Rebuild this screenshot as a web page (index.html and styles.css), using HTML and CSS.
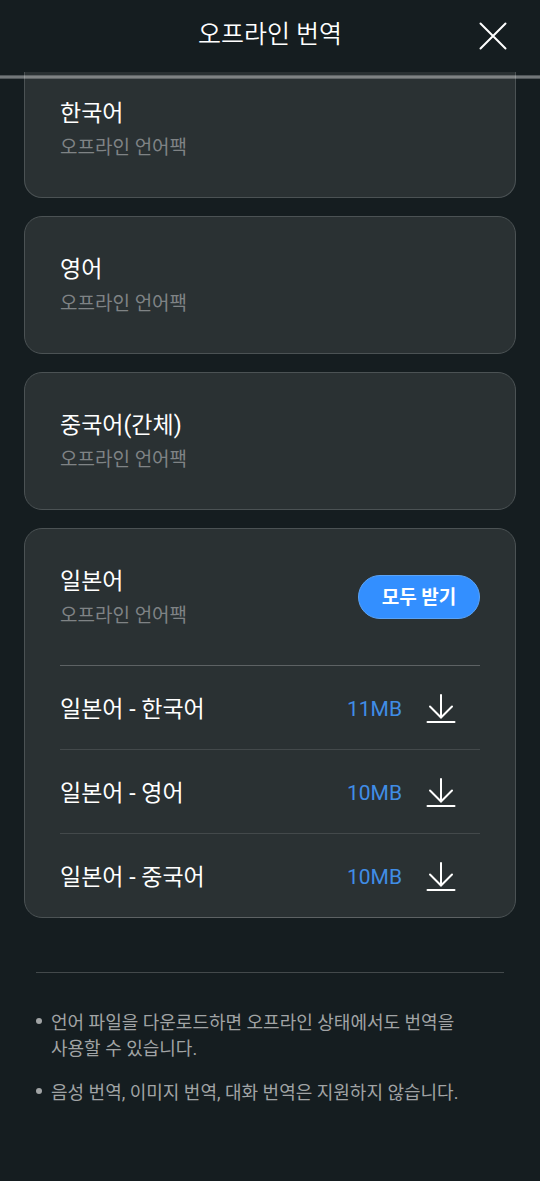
FILE: index.html
```html
<!DOCTYPE html>
<html lang="ko">
<head>
<meta charset="utf-8">
<meta name="viewport" content="width=device-width, initial-scale=1">
<title>오프라인 번역</title>
<link rel="stylesheet" href="styles.css">
</head>
<body>
<header class="topbar">
  <h1 class="topbar-title">오프라인 번역</h1>
  <button class="close" type="button" aria-label="닫기">
    <svg viewBox="0 0 28 28" width="28" height="28" aria-hidden="true"><path d="M1.5 1.5L26.5 26.5M26.5 1.5L1.5 26.5"/></svg>
  </button>
</header>
<main class="content">
  <section class="card card-first">
    <div class="card-head"><div class="label"><h2 class="name">한국어</h2><p class="sub">오프라인 언어팩</p></div></div>
  </section>
  <section class="card">
    <div class="card-head"><div class="label"><h2 class="name">영어</h2><p class="sub">오프라인 언어팩</p></div></div>
  </section>
  <section class="card">
    <div class="card-head"><div class="label"><h2 class="name">중국어(간체)</h2><p class="sub">오프라인 언어팩</p></div></div>
  </section>
  <section class="card">
    <div class="card-head">
      <div class="label"><h2 class="name">일본어</h2><p class="sub">오프라인 언어팩</p></div>
      <button class="get-all" type="button">모두 받기</button>
    </div>
    <ul class="packs">
      <li class="pack"><span class="pack-name">일본어 - 한국어</span><span class="size">11MB</span>
        <button class="download" type="button" aria-label="일본어 - 한국어 받기"><svg viewBox="0 0 30 30" width="30" height="30" aria-hidden="true"><path d="M15 1V23M4 12.5L15 23.5L26 12.5M1.5 28H28.5"/></svg></button></li>
      <li class="pack"><span class="pack-name">일본어 - 영어</span><span class="size">10MB</span>
        <button class="download" type="button" aria-label="일본어 - 영어 받기"><svg viewBox="0 0 30 30" width="30" height="30" aria-hidden="true"><path d="M15 1V23M4 12.5L15 23.5L26 12.5M1.5 28H28.5"/></svg></button></li>
      <li class="pack"><span class="pack-name">일본어 - 중국어</span><span class="size">10MB</span>
        <button class="download" type="button" aria-label="일본어 - 중국어 받기"><svg viewBox="0 0 30 30" width="30" height="30" aria-hidden="true"><path d="M15 1V23M4 12.5L15 23.5L26 12.5M1.5 28H28.5"/></svg></button></li>
    </ul>
  </section>
  <ul class="notes">
    <li class="note">언어 파일을 다운로드하면 오프라인 상태에서도 번역을 사용할 수 있습니다.</li>
    <li class="note">음성 번역, 이미지 번역, 대화 번역은 지원하지 않습니다.</li>
  </ul>
</main>
</body>
</html>
```
FILE: styles.css
```css
* { box-sizing: border-box; }
body {
  margin: 0;
  min-height: 100vh;
  background: #151d20;
  color: #fff;
  font-family: Roboto, "Noto Sans CJK KR", sans-serif;
}
h1, h2, p, ul { margin: 0; padding: 0; font-weight: 400; }
ul { list-style: none; }
button { border: 0; padding: 0; background: none; color: inherit; font: inherit; }
svg { display: block; fill: none; stroke: #fff; stroke-width: 2; stroke-linecap: round; }
.topbar {
  position: relative;
  display: grid;
  grid-template-columns: 94px 1fr 94px;
  align-items: center;
  height: 72px;
}
.topbar::after {
  content: "";
  position: absolute;
  top: 75px;
  left: 0;
  right: 0;
  height: 2px;
  border: solid rgba(255, 255, 255, 0.25);
  border-width: 1px 0;
  background: rgba(255, 255, 255, 0.4);
  background-clip: padding-box;
}
.topbar-title {
  grid-column: 2;
  padding-bottom: 2px;
  text-align: center;
  font-size: 25px;
  font-weight: 350;
  line-height: 36px;
}
.close { justify-self: center; }
.content { padding: 0 24px; }
.card {
  margin-bottom: 18px;
  border: 1px solid #4b5254;
  border-radius: 18px;
  background: #2a3133;
}
.card-first { border-top: 0; border-radius: 0 0 18px 18px; }
.card-head {
  display: flex;
  justify-content: space-between;
  align-items: center;
  height: 136px;
  padding: 0 35px;
}
.card-first .card-head { height: 125px; padding-bottom: 11px; }
.label { padding-top: 2px; }
.name { font-size: 23px; line-height: 36px; }
.sub { color: #7f8385; font-size: 19px; line-height: 32px; }
.get-all {
  width: 122px;
  height: 44px;
  padding-bottom: 4px;
  border: 1px solid #5ba3f5;
  border-radius: 22px;
  background: #338fff;
  font-size: 19px;
  font-weight: 700;
}
.packs { margin: 0 35px -1px; border-bottom: 1px solid #5d6264; }
.pack {
  display: flex;
  align-items: center;
  height: 84px;
  padding: 2px 24px 0 0;
  border-top: 1px solid #43494b;
}
.pack:first-child { border-color: #5d6264; }
.pack-name { flex: 1; padding-bottom: 4px; font-size: 23px; }
.size { margin-right: 24px; color: #408de6; font-size: 21px; }
.notes {
  margin: 54px 12px 0;
  padding-top: 37px;
  border-top: 1px solid #43494b;
}
.note {
  position: relative;
  margin-bottom: 18px;
  padding-left: 15px;
  color: #a1a4a5;
  font-size: 18px;
  line-height: 26px;
  word-break: keep-all;
}
.note::before {
  content: "";
  position: absolute;
  left: 0;
  top: 8px;
  width: 6px;
  height: 6px;
  border-radius: 50%;
  background: #a1a4a5;
}
```
